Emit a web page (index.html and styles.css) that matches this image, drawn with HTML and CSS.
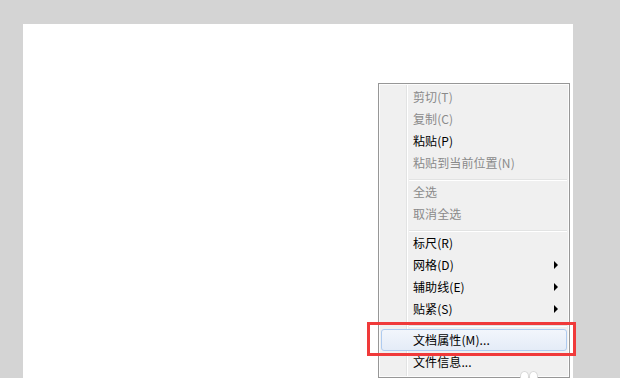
FILE: index.html
```html
<!DOCTYPE html>
<html lang="zh">
<head>
<meta charset="utf-8">
<link rel="stylesheet" href="styles.css">
</head>
<body>
<div class="paper"></div>
<div class="menu">
  <div class="gutter"></div>
  <div class="item disabled">剪切(T)</div>
  <div class="item disabled">复制(C)</div>
  <div class="item">粘贴(P)</div>
  <div class="item disabled">粘贴到当前位置(N)</div>
  <div class="sep"></div>
  <div class="item disabled">全选</div>
  <div class="item disabled">取消全选</div>
  <div class="sep"></div>
  <div class="item">标尺(R)</div>
  <div class="item sub">网格(D)</div>
  <div class="item sub">辅助线(E)</div>
  <div class="item sub">贴紧(S)</div>
  <div class="sep sep-last"></div>
  <div class="item hover">文档属性(M)...</div>
  <div class="item">文件信息...</div>
</div>
<div class="mark"></div>
<div class="paw"><span></span><span></span></div>
</body>
</html>
```
FILE: styles.css
```css
html, body {
  margin: 0;
  padding: 0;
}
body {
  background: #d4d4d4;
  width: 620px;
  height: 378px;
  overflow: hidden;
  position: relative;
  font-family: "Noto Sans CJK SC", "Microsoft YaHei", sans-serif;
  font-size: 12px;
}
.paper {
  margin: 24px 0 0 23px;
  width: 550px;
  height: 354px;
  background: #fff;
}
.menu {
  position: absolute;
  left: 378px;
  top: 83px;
  width: 190px;
  height: 291px;
  border: 1px solid #979797;
  background: #f0f0f0;
  box-shadow: inset 0 0 0 1px #fcfcfc;
  padding-top: 2px;
  box-sizing: content-box;
  overflow: hidden;
}
.gutter {
  position: absolute;
  left: 27px;
  top: 1px;
  bottom: 1px;
  width: 1px;
  background: #e2e3e3;
  border-right: 1px solid #fff;
}
.item {
  position: relative;
  height: 22px;
  line-height: 22px;
  padding-left: 34px;
  color: #000;
  white-space: nowrap;
  letter-spacing: 0.1px;
}
.item.disabled {
  color: #8a8a8a;
}
.item.sub::after {
  content: "";
  position: absolute;
  right: 11px;
  top: 7px;
  border-left: 4px solid #000;
  border-top: 4px solid transparent;
  border-bottom: 4px solid transparent;
}
.sep {
  height: 1px;
  margin: 5px 2px 0 30px;
  background: #e2e3e3;
  border-bottom: 1px solid #fff;
}
.sep-last {
  margin-top: 5px;
  margin-bottom: 2px;
}
.item.hover {
  margin: 1px 2px 0 2px;
  padding-left: 31px;
  height: 20px;
  line-height: 20px;
  border: 1px solid #aecbf0;
  border-radius: 3px;
  background: linear-gradient(#f2f6fc, #e4ecf7);
}
.mark {
  position: absolute;
  left: 367px;
  top: 322px;
  width: 203px;
  height: 28px;
  border: 3px solid #f03a3a;
}
.paw {
  position: absolute;
  left: 520px;
  top: 371px;
  display: flex;
}
.paw span {
  width: 7px;
  height: 9px;
  border: 1px solid #d8d8d8;
  border-radius: 50%;
  background: #fff;
}
```
